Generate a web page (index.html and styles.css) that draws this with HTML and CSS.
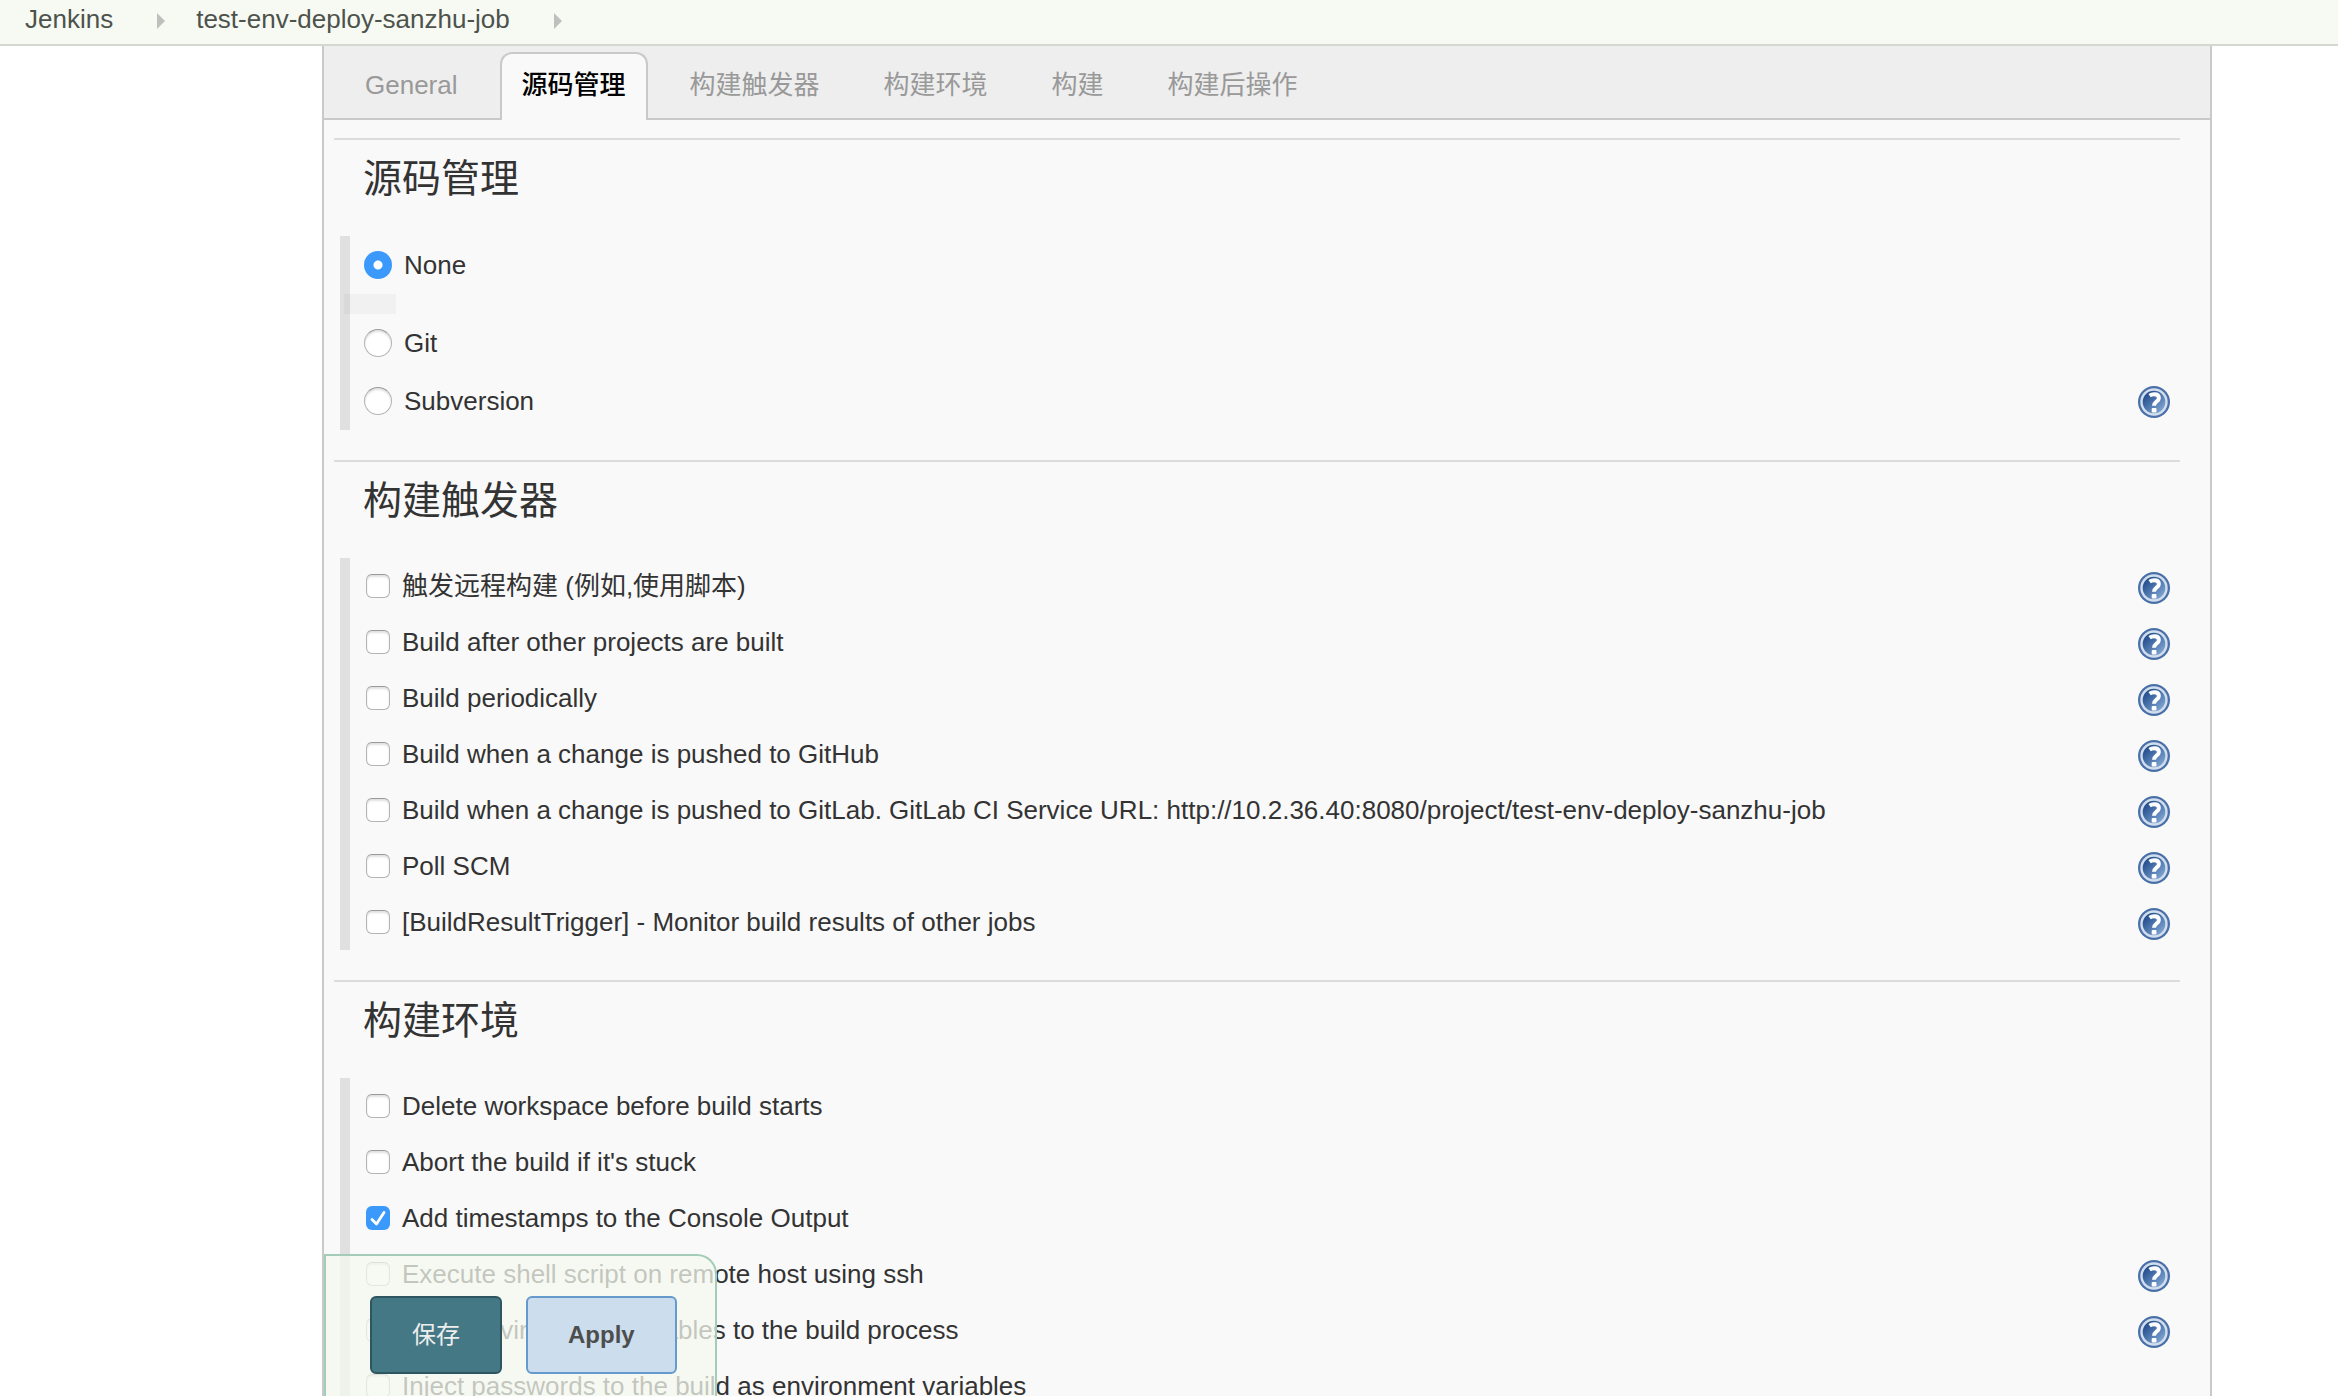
FILE: index.html
```html
<!DOCTYPE html>
<html lang="zh-CN">
<head>
<meta charset="utf-8">
<title>test-env-deploy-sanzhu-job Config [Jenkins]</title>
<link rel="stylesheet" href="styles.css">
</head>
<body>
<svg class="defs" aria-hidden="true">
  <defs>
    <linearGradient id="disc" x1="0" y1="0" x2="1" y2="1">
      <stop offset="0.15" stop-color="#1f4a8a"/>
      <stop offset="0.9" stop-color="#86abd8"/>
    </linearGradient>
    <symbol id="help" viewBox="0 0 32 32">
      <circle cx="16" cy="16" r="16" fill="#4a70aa"/>
      <circle cx="16" cy="16" r="12.500" fill="url(#disc)" stroke="#d3deec" stroke-width="2.400"/>
      <path d="M11.600 9.600C13 8.600 14.600 8.200 16.200 8.200c2.900 0 4.700 1.300 4.700 3.700 0 3.600-4.900 3.700-4.900 7.900" fill="none" stroke="#fff" stroke-width="4"/>
      <rect x="13.700" y="22" width="4.800" height="4.400" rx="1" fill="#fff"/>
    </symbol>
    <symbol id="chevron" viewBox="0 0 10 16">
      <path d="M1 0 9 8 1 16z" fill="#bfc0bd"/>
    </symbol>
  </defs>
</svg>

<nav class="breadcrumbs">
  <a href="#">Jenkins</a>
  <svg class="chevron"><use href="#chevron"/></svg>
  <a href="#">test-env-deploy-sanzhu-job</a>
  <svg class="chevron"><use href="#chevron"/></svg>
</nav>

<main class="page">
  <form class="panel">
    <nav class="tabs">
      <a class="tab" href="#general">General</a>
      <a class="tab active" href="#scm">源码管理</a>
      <a class="tab" href="#triggers">构建触发器</a>
      <a class="tab" href="#env">构建环境</a>
      <a class="tab" href="#build">构建</a>
      <a class="tab" href="#post">构建后操作</a>
    </nav>

    <div class="sections">
      <section class="section" id="scm">
        <h2>源码管理</h2>
        <div class="options">
          <div class="row radio-row"><label><input type="radio" name="scm" checked>None</label></div>
          <div class="nested"></div>
          <div class="row radio-row"><label><input type="radio" name="scm">Git</label></div>
          <div class="row radio-row"><label><input type="radio" name="scm">Subversion</label><a class="help" href="#" aria-label="Help"><svg><use href="#help"/></svg></a></div>
        </div>
      </section>

      <section class="section" id="triggers">
        <h2>构建触发器</h2>
        <div class="options">
          <div class="row"><label><input type="checkbox">触发远程构建 (例如,使用脚本)</label><a class="help" href="#" aria-label="Help"><svg><use href="#help"/></svg></a></div>
          <div class="row"><label><input type="checkbox">Build after other projects are built</label><a class="help" href="#" aria-label="Help"><svg><use href="#help"/></svg></a></div>
          <div class="row"><label><input type="checkbox">Build periodically</label><a class="help" href="#" aria-label="Help"><svg><use href="#help"/></svg></a></div>
          <div class="row"><label><input type="checkbox">Build when a change is pushed to GitHub</label><a class="help" href="#" aria-label="Help"><svg><use href="#help"/></svg></a></div>
          <div class="row"><label><input type="checkbox">Build when a change is pushed to GitLab. GitLab CI Service URL: http://10.2.36.40:8080/project/test-env-deploy-sanzhu-job</label><a class="help" href="#" aria-label="Help"><svg><use href="#help"/></svg></a></div>
          <div class="row"><label><input type="checkbox">Poll SCM</label><a class="help" href="#" aria-label="Help"><svg><use href="#help"/></svg></a></div>
          <div class="row"><label><input type="checkbox">[BuildResultTrigger] - Monitor build results of other jobs</label><a class="help" href="#" aria-label="Help"><svg><use href="#help"/></svg></a></div>
        </div>
      </section>

      <section class="section" id="env">
        <h2>构建环境</h2>
        <div class="options">
          <div class="row"><label><input type="checkbox">Delete workspace before build starts</label></div>
          <div class="row"><label><input type="checkbox">Abort the build if it's stuck</label></div>
          <div class="row"><label><input type="checkbox" checked>Add timestamps to the Console Output</label></div>
          <div class="row"><label><input type="checkbox">Execute shell script on remote host using ssh</label><a class="help" href="#" aria-label="Help"><svg><use href="#help"/></svg></a></div>
          <div class="row"><label><input type="checkbox">Inject environment variables to the build process</label><a class="help" href="#" aria-label="Help"><svg><use href="#help"/></svg></a></div>
          <div class="row"><label><input type="checkbox">Inject passwords to the build as environment variables</label></div>
        </div>
      </section>
    </div>

    <div class="actions">
      <button class="save" type="submit">保存</button>
      <button class="apply" type="button">Apply</button>
    </div>
  </form>
</main>
</body>
</html>
```
FILE: styles.css
```css
* {
  box-sizing: border-box;
}

body {
  margin: 0;
  height: 100vh;
  display: flex;
  flex-direction: column;
  overflow: hidden;
  background: #fff;
  color: #333;
  font: 26px/32px "Liberation Sans", "Noto Sans CJK SC", sans-serif;
}

a {
  color: inherit;
  text-decoration: none;
}

.defs {
  position: absolute;
  width: 0;
  height: 0;
}

.breadcrumbs {
  flex: none;
  display: flex;
  align-items: center;
  height: 46px;
  padding: 0 25px 6px;
  background: #f6faf2;
  border-bottom: 2px solid #d3d9cf;
  color: #4d524d;
}

.chevron {
  width: 10px;
  height: 16px;
  margin: 4px 30px 0 43px;
}

.page {
  flex: 1;
  min-height: 0;
  overflow-y: auto;
  scrollbar-width: none;
  padding: 0 126px 0 322px;
}

.panel {
  min-height: 100%;
  background: #f9f9f9;
  border: solid #c9c9c9;
  border-width: 0 2px;
}

.tabs {
  display: flex;
  align-items: flex-end;
  gap: 20px;
  height: 74px;
  padding: 0 19px;
  background: #eee;
  border-bottom: 2px solid #c9c9c9;
  color: #999;
}

.tab {
  height: 68px;
  margin-bottom: -2px;
  padding: 15px 20px;
  border: 2px solid transparent;
  border-bottom: 0;
  border-radius: 12px 12px 0 0;
}

.tab.active {
  background: #f9f9f9;
  border-color: #c9c9c9;
  color: #000;
  font-weight: 500;
}

.sections {
  padding: 18px 30px 30px 10px;
}

.section {
  margin-bottom: 30px;
  border-top: 2px solid #dcdcdc;
}

.section h2 {
  margin: 0;
  padding: 15px 29px 33px;
  font-size: 39px;
  line-height: 48px;
  font-weight: 400;
}

.options {
  margin: 0 -2px 0 6px;
  border-left: 10px solid #e0e0e0;
}

.row {
  display: flex;
  align-items: center;
  justify-content: space-between;
  height: 56px;
  padding: 0 12px 0 16px;
}

.radio-row {
  height: 58px;
  padding-left: 14px;
}

.row label {
  display: flex;
  align-items: center;
  gap: 12px;
}

.nested {
  width: 52px;
  height: 20px;
  margin-left: -6px;
  background: rgba(0, 0, 0, 0.03);
}

input {
  appearance: none;
  flex: none;
  width: 24px;
  height: 24px;
  margin: 0;
  background: #fff;
  border: 1px solid #b4b4b4;
  border-top-color: #999;
  border-radius: 6px;
  box-shadow: inset 0 2px 2px rgba(0, 0, 0, 0.12);
}

input[type="radio"] {
  width: 28px;
  height: 28px;
  border-radius: 50%;
}

input:checked {
  border: 0;
  box-shadow: none;
  background: #3b99fc;
}

input[type="radio"]:checked {
  background: radial-gradient(circle, #fff 4px, #3b99fc 5px);
}

input[type="checkbox"]:checked {
  background: #3b99fc url("data:image/svg+xml,%3Csvg xmlns='http://www.w3.org/2000/svg' viewBox='0 0 24 24'%3E%3Cpath d='M6 13.500 10.500 18 18 6.500' fill='none' stroke='%23fff' stroke-width='2.800' stroke-linecap='round' stroke-linejoin='round'/%3E%3C/svg%3E");
}

.help,
.help svg {
  display: block;
  width: 32px;
  height: 32px;
}

.help {
  margin-top: 4px;
}

.radio-row .help {
  margin-top: 2px;
}

.actions {
  position: fixed;
  bottom: 0;
  left: 324px;
  display: flex;
  gap: 24px;
  padding: 40px 38px 22px 44px;
  background: rgba(244, 248, 237, 0.75);
  border: 2px solid #a3ccb9;
  border-bottom: 0;
  border-top-right-radius: 20px;
}

button {
  height: 78px;
  padding: 0 40px;
  border: 2px solid;
  border-radius: 6px;
  font: inherit;
  font-size: 24px;
}

.save {
  background: #457885;
  border-color: #2f5561;
  color: #eee;
}

.apply {
  background: #ccdded;
  border-color: #6699cc;
  color: #4d4d4d;
  font-weight: 700;
}
```
